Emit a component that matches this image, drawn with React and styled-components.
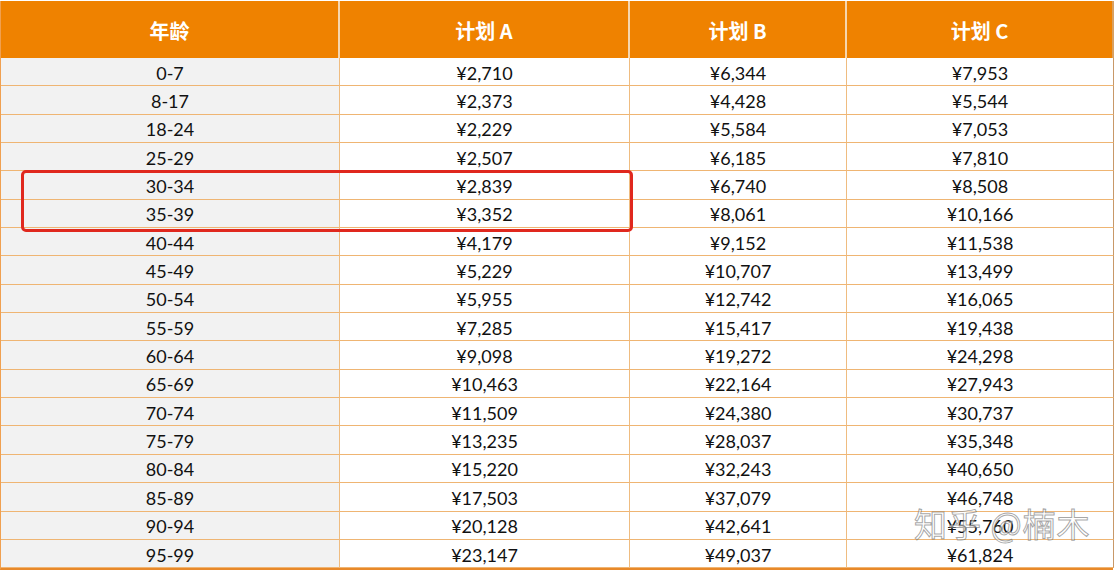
import React from 'react';
import styled, { createGlobalStyle } from 'styled-components';

const GlobalStyle = createGlobalStyle`
    body {
        margin: 0;
        background: #ffffff;
    }
`;

const Page = styled.div`
    position: relative;
    width: 1119px;
    height: 570px;
    overflow: hidden;
    background: #ffffff;
`;

const Table = styled.div`
    display: grid;
    grid-template-columns: 339px 290px 217px 267px;
    grid-template-rows: 57px repeat(18, 28.35px);
    width: 1113px;
    margin-top: 1px;
    border-left: 1px solid #f0a050;
    border-bottom: 2px solid #e8892a;
    box-sizing: border-box;
`;

const HeadCell = styled.div`
    display: flex;
    align-items: center;
    justify-content: center;
    background: #ef8200;
    color: #ffffff;
    font-family: 'Noto Sans CJK SC', 'Open Sans', sans-serif;
    font-weight: 700;
    font-size: 20px;
    padding-top: 2px;
    border-right: 2px solid ${p => (p.last ? '#d9a060' : '#f6d6ae')};
    box-sizing: border-box;
`;

const Cell = styled.div`
    display: flex;
    align-items: center;
    justify-content: center;
    background: ${p => (p.first ? '#f2f2f2' : '#ffffff')};
    color: #111111;
    font-family: Lato, 'Open Sans', sans-serif;
    font-size: 18px;
    border-right: 1px solid ${p => (p.last ? '#c89868' : '#efbc80')};
    border-bottom: 1px solid #efb573;
    box-sizing: border-box;
    padding-top: 2px;
`;

const Highlight = styled.div`
    position: absolute;
    left: 21px;
    top: 170px;
    width: 612px;
    height: 62px;
    border: 3px solid #e0281e;
    border-radius: 5px;
    box-sizing: border-box;
`;

const Watermark = styled.div`
    position: absolute;
    left: 914px;
    top: 499px;
    font-family: 'Noto Sans CJK SC', sans-serif;
    font-size: 33px;
    color: rgba(255, 255, 255, 0.55);
    -webkit-text-stroke: 1px rgba(90, 90, 90, 0.55);
    letter-spacing: 1px;
    white-space: nowrap;
`;

const rows = [
    ['0-7', '¥2,710', '¥6,344', '¥7,953'],
    ['8-17', '¥2,373', '¥4,428', '¥5,544'],
    ['18-24', '¥2,229', '¥5,584', '¥7,053'],
    ['25-29', '¥2,507', '¥6,185', '¥7,810'],
    ['30-34', '¥2,839', '¥6,740', '¥8,508'],
    ['35-39', '¥3,352', '¥8,061', '¥10,166'],
    ['40-44', '¥4,179', '¥9,152', '¥11,538'],
    ['45-49', '¥5,229', '¥10,707', '¥13,499'],
    ['50-54', '¥5,955', '¥12,742', '¥16,065'],
    ['55-59', '¥7,285', '¥15,417', '¥19,438'],
    ['60-64', '¥9,098', '¥19,272', '¥24,298'],
    ['65-69', '¥10,463', '¥22,164', '¥27,943'],
    ['70-74', '¥11,509', '¥24,380', '¥30,737'],
    ['75-79', '¥13,235', '¥28,037', '¥35,348'],
    ['80-84', '¥15,220', '¥32,243', '¥40,650'],
    ['85-89', '¥17,503', '¥37,079', '¥46,748'],
    ['90-94', '¥20,128', '¥42,641', '¥55,760'],
    ['95-99', '¥23,147', '¥49,037', '¥61,824'],
];

const headers = ['年龄', '计划 A', '计划 B', '计划 C'];

export default function App() {
    return (
        <Page>
            <GlobalStyle />
            <Table>
                {headers.map((h, i) => (
                    <HeadCell key={h} last={i === 3}>{h}</HeadCell>
                ))}
                {rows.map(r =>
                    r.map((v, i) => (
                        <Cell key={r[0] + i} first={i === 0} last={i === 3}>{v}</Cell>
                    ))
                )}
            </Table>
            <Highlight />
            <Watermark>知乎 @楠木</Watermark>
        </Page>
    );
}
